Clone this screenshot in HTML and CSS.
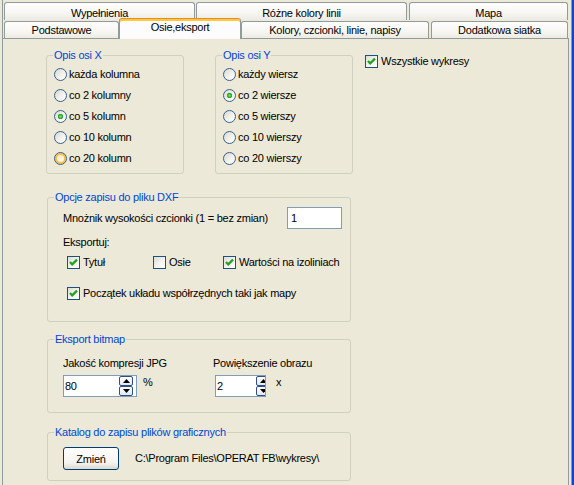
FILE: index.html
```html
<!DOCTYPE html>
<html lang="pl">
<head>
<meta charset="utf-8">
<title>Osie, eksport</title>
<link rel="stylesheet" href="styles.css">
</head>
<body>
<div class="window">
  <div class="dialog">
    <div class="tabrow back">
      <div class="tab w191">Wypełnienia</div>
      <div class="tab w211 g1">Różne kolory linii</div>
      <div class="tab w159 g2">Mapa</div>
    </div>
    <div class="tabrow front">
      <div class="tab w115">Podstawowe</div>
      <div class="tab sel w122">Osie,eksport</div>
      <div class="tab w188">Kolory, czcionki, linie, napisy</div>
      <div class="tab w137 g2">Dodatkowa siatka</div>
    </div>
    <div class="page">
      <div class="row-top">
        <fieldset class="grp grp-axis">
          <legend>Opis osi X</legend>
          <div class="axis-body">
            <div class="opt"><span class="radio"></span>każda kolumna</div>
            <div class="opt"><span class="radio"></span>co 2 kolumny</div>
            <div class="opt"><span class="radio on"></span>co 5 kolumn</div>
            <div class="opt"><span class="radio"></span>co 10 kolumn</div>
            <div class="opt"><span class="radio hot"></span>co 20 kolumn</div>
          </div>
        </fieldset>
        <fieldset class="grp grp-axis grp-y">
          <legend>Opis osi Y</legend>
          <div class="axis-body">
            <div class="opt"><span class="radio"></span>każdy wiersz</div>
            <div class="opt"><span class="radio on"></span>co 2 wiersze</div>
            <div class="opt"><span class="radio"></span>co 5 wierszy</div>
            <div class="opt"><span class="radio"></span>co 10 wierszy</div>
            <div class="opt"><span class="radio"></span>co 20 wierszy</div>
          </div>
        </fieldset>
        <div class="chk-line all">
          <span class="chk"><svg width="11" height="11" viewBox="0 0 11 11"><path d="M2 5 L4.2 7.4 L9 2.6" fill="none" stroke="#21A121" stroke-width="2.2"/></svg></span>Wszystkie wykresy
        </div>
      </div>

      <fieldset class="grp grp-wide grp-dxf">
        <legend>Opcje zapisu do pliku DXF</legend>
        <div class="dxf-body">
          <div class="mult-row">
            <span class="mult-label">Mnożnik wysokości czcionki (1 = bez zmian)</span>
            <div class="textbox tb-mult">1</div>
          </div>
          <div class="export-label">Eksportuj:</div>
          <div class="chk-grid">
            <div class="chk-line"><span class="chk"><svg width="11" height="11" viewBox="0 0 11 11"><path d="M2 5 L4.2 7.4 L9 2.6" fill="none" stroke="#21A121" stroke-width="2.2"/></svg></span>Tytuł</div>
            <div class="chk-line"><span class="chk"></span>Osie</div>
            <div class="chk-line"><span class="chk"><svg width="11" height="11" viewBox="0 0 11 11"><path d="M2 5 L4.2 7.4 L9 2.6" fill="none" stroke="#21A121" stroke-width="2.2"/></svg></span>Wartości na izoliniach</div>
          </div>
          <div class="chk-line origin"><span class="chk"><svg width="11" height="11" viewBox="0 0 11 11"><path d="M2 5 L4.2 7.4 L9 2.6" fill="none" stroke="#21A121" stroke-width="2.2"/></svg></span>Początek układu współrzędnych taki jak mapy</div>
        </div>
      </fieldset>

      <fieldset class="grp grp-wide grp-bmp">
        <legend>Eksport bitmap</legend>
        <div class="bmp-body">
          <div class="bmp-col c1">
            <div class="bmp-label">Jakość kompresji JPG</div>
            <div class="spin-row">
              <div class="textbox spinbox sb-jpg">80<span class="spin"><span class="sbtn"><svg width="7" height="4" viewBox="0 0 7 4"><path d="M0 4 L3.5 0 L7 4 Z" fill="#000"/></svg></span><span class="sbtn"><svg width="7" height="4" viewBox="0 0 7 4"><path d="M0 0 L3.5 4 L7 0 Z" fill="#000"/></svg></span></span></div>
              <span class="unit">%</span>
            </div>
          </div>
          <div class="bmp-col c2">
            <div class="bmp-label">Powiększenie obrazu</div>
            <div class="spin-row">
              <div class="textbox spinbox sb-zoom">2<span class="spin"><span class="sbtn"><svg width="7" height="4" viewBox="0 0 7 4"><path d="M0 4 L3.5 0 L7 4 Z" fill="#000"/></svg></span><span class="sbtn"><svg width="7" height="4" viewBox="0 0 7 4"><path d="M0 0 L3.5 4 L7 0 Z" fill="#000"/></svg></span></span></div>
              <span class="unit ux">x</span>
            </div>
          </div>
        </div>
      </fieldset>

      <fieldset class="grp grp-wide grp-dir">
        <legend>Katalog do zapisu plików graficznych</legend>
        <div class="dir-body">
          <button class="btn" type="button">Zmień</button>
          <span class="path">C:\Program Files\OPERAT FB\wykresy\</span>
        </div>
      </fieldset>
    </div>
  </div>
  <div class="edge-gray"></div>
  <div class="edge-blue"></div>
</div>
</body>
</html>
```

FILE: styles.css
```css
* { box-sizing: border-box; }
html, body { margin: 0; padding: 0; }
body {
  background: #ECE9D8;
  font-family: "Liberation Sans", Arial, sans-serif;
  font-size: 11px;
  line-height: 13px;
  letter-spacing: -0.25px;
  color: #000;
}
.window {
  width: 574px;
  height: 485px;
  overflow: hidden;
  display: flex;
  background: #ECE9D8;
}
.dialog {
  width: 569px;
  margin-left: 2px;
  height: 485px;
  border-left: 1px solid #919B9C;
  padding: 2px 2px 0 0;
  flex: none;
}
.edge-gray { width: 1px; flex: none; background: #8D99A6; }
.edge-blue { width: 2px; flex: none; background: #0A45DA; }

/* tabs */
.tabrow { display: flex; margin-left: 1px; height: 18px; }
.tabrow.front { align-items: flex-end; }
.tab {
  flex: none;
  height: 18px;
  border: 1px solid #919B9C;
  border-bottom: none;
  border-radius: 3px 3px 0 0;
  background: linear-gradient(#FEFEFE, #F7F6F2 60%, #ECEAE2);
  display: flex;
  align-items: center;
  justify-content: center;
  white-space: nowrap;
}
.back .tab { padding-top: 3px; }
.front .tab { height: 17px; }
.front .tab.sel {
  height: 21px;
  margin-bottom: -1px;
  position: relative;
  z-index: 2;
  background: #FCFCFE;
  border-top: 1px solid #E68B2C;
  box-shadow: inset 0 2px 0 #FFC83C;
  align-items: flex-start;
  padding-top: 2px;
}
.w191 { width: 191px; }
.w211 { width: 211px; }
.w159 { width: 159px; }
.w115 { width: 115px; }
.w122 { width: 122px; }
.w188 { width: 188px; }
.w137 { width: 137px; }
.g1 { margin-left: 1px; }
.g2 { margin-left: 2px; }

/* page */
.page {
  width: 566px;
  height: 470px;
  border: 1px solid #919B9C;
  border-left: none;
  background: #ECE9D8;
  padding-top: 10px;
}

/* group boxes */
.grp {
  margin: 0;
  padding: 0;
  border: 1px solid #D0D0BF;
  border-radius: 3px;
  min-width: 0;
}
.grp legend {
  margin-left: 6px;
  padding: 0 1px;
  color: #0046D5;
  line-height: 13px;
}

.row-top { display: flex; align-items: flex-start; margin-left: 43px; }
.grp-axis { width: 138px; flex: none; }
.grp-y { margin-left: 31px; }
.axis-body { padding: 2px 0 4px 7px; }
.opt { height: 21px; display: flex; align-items: center; white-space: nowrap; }

.radio {
  width: 13px;
  height: 13px;
  flex: none;
  border-radius: 50%;
  border: 1px solid #3A5F8B;
  background: linear-gradient(135deg, #D9D8D1 0%, #F2F2EE 55%, #FFFFFF 100%);
  margin-right: 2px;
}
.radio.on {
  background:
    radial-gradient(circle at 50% 50%, #7EE07A 0, #3CBB38 1.6px, #21A121 2.4px, rgba(33,161,33,0) 3px),
    linear-gradient(135deg, #D9D8D1 0%, #F2F2EE 55%, #FFFFFF 100%);
}
.radio.hot {
  box-shadow: inset 0 0 0 2px #F9BE4A;
  background: linear-gradient(135deg, #FBE8B8, #FFFDF6);
}

.chk-line { display: flex; align-items: center; white-space: nowrap; height: 16px; }
.chk {
  width: 13px;
  height: 13px;
  flex: none;
  border: 1px solid #1C5180;
  background: linear-gradient(135deg, #DCDCD7 0%, #F4F4F0 55%, #FFFFFF 100%);
  margin-right: 3px;
  display: flex;
  align-items: center;
  justify-content: center;
}
.chk svg { display: block; }
.all { margin-left: 12px; margin-top: 4px; }

.grp-wide { width: 304px; margin-left: 44px; }
.grp-dxf { margin-top: 17px; }
.dxf-body { padding: 3px 8px 20px 15px; }
.mult-row { display: flex; align-items: center; height: 22px; }
.mult-label { width: 224px; flex: none; white-space: nowrap; }
.textbox {
  height: 22px;
  border: 1px solid #7F9DB9;
  background: #FFFFFF;
  padding-left: 3px;
  display: flex;
  align-items: center;
}
.tb-mult { width: 55px; }
.export-label { margin-top: 6px; line-height: 14px; }
.chk-grid {
  display: grid;
  grid-template-columns: 86px 70px auto;
  margin-top: 5px;
  padding-left: 4px;
}
.origin { margin-top: 15px; margin-left: 4px; }

.grp-bmp { margin-top: 11px; }
.bmp-body { display: flex; padding: 10px 0 15px 15px; }
.bmp-col.c1 { width: 150px; flex: none; }
.bmp-label { line-height: 14px; white-space: nowrap; }
.spin-row { display: flex; align-items: flex-start; margin-top: 5px; }
.spinbox {
  position: relative;
  padding-left: 1px;
  overflow: hidden;
}
.sb-jpg { width: 74px; }
.sb-zoom { width: 51px; margin-left: 2px; }
.spin {
  position: absolute;
  top: 0;
  bottom: 0;
  display: flex;
  flex-direction: column;
  justify-content: space-between;
  width: 14px;
}
.sb-jpg .spin { right: 3px; }
.sb-zoom .spin { left: 40px; }
.sbtn {
  height: 10px;
  border: 1px solid #2F4F86;
  border-radius: 2px;
  background: linear-gradient(#FFFFFF, #E3E9F5);
  display: flex;
  align-items: center;
  justify-content: center;
}
.sbtn svg { display: block; }
.unit { margin-left: 6px; line-height: 14px; }
.ux { margin-left: 10px; }

.grp-dir { margin-top: 13px; }
.dir-body { display: flex; align-items: center; padding: 8px 0 10px 15px; }
.btn {
  width: 56px;
  height: 23px;
  border: 1px solid #003C74;
  border-radius: 3px;
  background: linear-gradient(#FFFFFF, #F5F4EF 70%, #DDD8CC);
  font-family: "Liberation Sans", Arial, sans-serif;
  font-size: 11px;
  letter-spacing: -0.25px;
  color: #000;
  padding: 0;
  margin: 0;
}
.path { margin-left: 16px; white-space: nowrap; }
```
